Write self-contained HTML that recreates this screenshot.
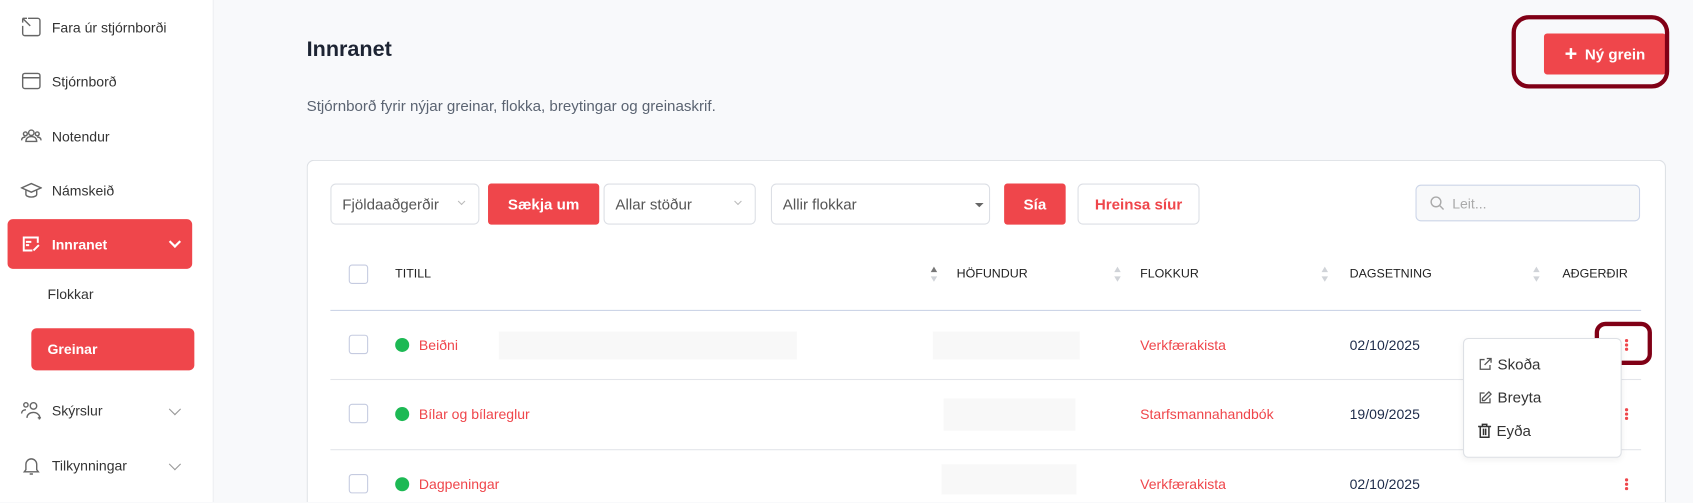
<!DOCTYPE html>
<html><head><meta charset="utf-8"><style>
*{box-sizing:border-box;margin:0;padding:0}
html,body{width:1693px;height:503px;overflow:hidden;background:#f8f9fb;font-family:"Liberation Sans",Arial,sans-serif}
#w{position:absolute;left:0;top:0;width:1568px;height:465px;overflow:hidden;transform:scale(1.0797);transform-origin:0 0;background:#f8f9fb}
.a{position:absolute}
.side{left:0;top:0;width:198px;height:465px;background:#fff;border-right:1px solid #eceef2}
.ni{position:absolute;left:19px;font-size:13px;color:#333;display:flex;align-items:center;gap:9px}
.ni svg{width:20px;height:20px;fill:none;stroke:#666;stroke-width:1.3}
.chev{position:absolute;left:158px;width:8px;height:8px;border-right:1.3px solid #999;border-bottom:1.3px solid #999;transform:rotate(45deg)}
.sel{border:1px solid #dcdfe5;border-radius:5px;background:#fff;height:38px;font-size:14px;color:#555;display:flex;align-items:center;padding-left:10px}
.btn{background:#ef464b;color:#fff;border-radius:3px;font-weight:bold;font-size:14px;display:flex;align-items:center;justify-content:center}
.th{font-size:11.5px;color:#222;top:248px}
.sort{width:6px;top:247px}
.sort:before{content:"";position:absolute;left:0;top:0;border:3.5px solid transparent;border-bottom:5px solid #d0d3d8;border-top:0}
.sort:after{content:"";position:absolute;left:0;top:9px;border:3.5px solid transparent;border-top:5px solid #d0d3d8;border-bottom:0}
.sort.d:before{border-bottom-color:#777}
.cb{width:18px;height:18px;border:1px solid #c5cbe0;border-radius:3px;background:#fff}
.dot{width:13px;height:13px;border-radius:50%;background:#1db954}
.red{color:#ef464b;font-size:13px}
.date{font-size:13px;color:#1d2b4a}
.ph{background:#f8f8f8}
.kb{width:3px;height:3px;background:#ef464b;border-radius:50%;box-shadow:0 4px 0 #ef464b,0 8px 0 #ef464b}
</style></head><body><div id="w">
<div class="a side">
 <div class="ni" style="top:15px"><svg viewBox="0 0 20 20"><path d="M7 2h9a2 2 0 0 1 2 2v12a2 2 0 0 1-2 2H4a2 2 0 0 1-2-2V9M2 2l7 7M2 2v4M2 2h4"/></svg>Fara úr stjórnborði</div>
 <div class="ni" style="top:65px"><svg viewBox="0 0 20 20"><rect x="2" y="3" width="16" height="14" rx="2"/><path d="M2 7h16"/></svg>Stjórnborð</div>
 <div class="ni" style="top:116px"><svg viewBox="0 0 20 20"><circle cx="10" cy="7" r="2.5"/><circle cx="4.5" cy="8" r="1.8"/><circle cx="15.5" cy="8" r="1.8"/><path d="M5 15c0-3 2-4.5 5-4.5s5 1.5 5 4.5zM1 14c0-2 1-3 3.5-3M19 14c0-2-1-3-3.5-3"/></svg>Notendur</div>
 <div class="ni" style="top:166px"><svg viewBox="0 0 20 20"><path d="M10 4L1 8l9 4 9-4zM5 10v4c0 1.5 2.5 2.5 5 2.5s5-1 5-2.5v-4"/></svg>Námskeið</div>
 <div class="a" style="left:7px;top:203px;width:171px;height:46px;background:#ef464b;border-radius:5px"></div>
 <div class="ni" style="top:216px;color:#fff;font-weight:bold"><svg viewBox="0 0 20 20" style="stroke:#fff;stroke-width:1.8"><path d="M16 9V4H3v12h8M5 8h5M5 11h3M12 16l5-5"/></svg>Innranet</div>
 <div class="chev" style="top:220px;border-color:#fff;border-width:2px"></div>
 <div class="a" style="left:44px;top:265px;font-size:13px;color:#333">Flokkar</div>
 <div class="a" style="left:29px;top:304px;width:151px;height:39px;background:#ef464b;border-radius:5px;color:#fff;font-weight:bold;font-size:13px;padding:12px 0 0 15px">Greinar</div>
 <div class="ni" style="top:370px"><svg viewBox="0 0 20 20"><circle cx="5" cy="5" r="2"/><circle cx="12" cy="6" r="3"/><path d="M1 13c0-2 1.5-3.5 4-3.5M6 17c0-3 2.5-5 6-5s5 2 6 4M16 17h3M17.5 15.5v3"/></svg>Skýrslur</div>
 <div class="chev" style="top:375px"></div>
 <div class="ni" style="top:421px"><svg viewBox="0 0 20 20"><path d="M5 14V9a5 5 0 0 1 10 0v5l1.5 2h-13zM8.5 18h3"/></svg>Tilkynningar</div>
 <div class="chev" style="top:426px"></div>
</div>
<div class="a" style="left:284px;top:35px;font-size:20px;font-weight:bold;color:#1d2433">Innranet</div>
<div class="a" style="left:284px;top:90px;font-size:14px;color:#5b6472">Stjórnborð fyrir nýjar greinar, flokka, breytingar og greinaskrif.</div>
<div class="a btn" style="left:1430px;top:31px;width:113px;height:38px;font-size:14px"><span style="font-size:20px;margin-right:7px;font-weight:bold">+</span>Ný grein</div>
<div class="a" style="left:1400px;top:14px;width:146px;height:68px;border:4px solid #800016;border-radius:16px"></div>
<div class="a" style="left:284px;top:148px;width:1259px;height:317px;background:#fff;border:1px solid #dde0e5;border-bottom:0;border-radius:7px 7px 0 0"></div>
<div class="a sel" style="left:306px;top:170px;width:138px">Fjöldaaðgerðir<span class="chev" style="left:118px;top:13px;width:5px;height:5px;border-color:#bbb"></span></div>
<div class="a btn" style="left:452px;top:170px;width:103px;height:38px">Sækja um</div>
<div class="a sel" style="left:559px;top:170px;width:141px">Allar stöður<span class="chev" style="left:121px;top:13px;width:5px;height:5px;border-color:#bbb"></span></div>
<div class="a sel" style="left:714px;top:170px;width:203px">Allir flokkar<span class="a" style="left:188px;top:17px;border:4px solid transparent;border-top:4px solid #666;border-bottom:0"></span></div>
<div class="a btn" style="left:930px;top:170px;width:57px;height:38px">Sía</div>
<div class="a sel" style="left:998px;top:170px;width:113px;justify-content:center;padding:0;color:#ef464b;font-weight:bold">Hreinsa síur</div>
<div class="a sel" style="left:1311px;top:171px;width:208px;height:34px;background:#f8f9fa;border-color:#ccd5e8;color:#aaa;font-size:13px;padding-left:12px"><svg width="14" height="14" viewBox="0 0 14 14" style="margin-right:7px" fill="none" stroke="#aaa" stroke-width="1.3"><circle cx="6" cy="6" r="4.5"/><path d="M9.5 9.5L13 13"/></svg>Leit...</div>
<div class="a cb" style="left:323px;top:245px"></div>
<div class="a th" style="left:366px">TITILL</div>
<div class="a sort d" style="left:862px"></div>
<div class="a th" style="left:886px">HÖFUNDUR</div>
<div class="a sort" style="left:1032px"></div>
<div class="a th" style="left:1056px">FLOKKUR</div>
<div class="a sort" style="left:1224px"></div>
<div class="a th" style="left:1250px">DAGSETNING</div>
<div class="a sort" style="left:1420px"></div>
<div class="a th" style="left:1447px">AÐGERÐIR</div>
<div class="a" style="left:306px;top:287px;width:1214px;height:1px;background:#cbd3e6"></div>
<div class="a" style="left:306px;top:351px;width:1214px;height:1px;background:#e3e5ea"></div>
<div class="a" style="left:306px;top:416px;width:1214px;height:1px;background:#e3e5ea"></div>
<div class="a cb" style="left:323px;top:310px"></div><div class="a dot" style="left:366px;top:313px"></div><div class="a red" style="left:388px;top:312px">Beiðni</div>
<div class="a ph" style="left:462px;top:307px;width:276px;height:26px"></div><div class="a ph" style="left:864px;top:307px;width:136px;height:26px"></div>
<div class="a red" style="left:1056px;top:312px">Verkfærakista</div><div class="a date" style="left:1250px;top:312px">02/10/2025</div>
<div class="a cb" style="left:323px;top:374px"></div><div class="a dot" style="left:366px;top:377px"></div><div class="a red" style="left:388px;top:376px">Bílar og bílareglur</div>
<div class="a ph" style="left:874px;top:369px;width:122px;height:30px"></div>
<div class="a red" style="left:1056px;top:376px">Starfsmannahandbók</div><div class="a date" style="left:1250px;top:376px">19/09/2025</div>
<div class="a cb" style="left:323px;top:439px"></div><div class="a dot" style="left:366px;top:442px"></div><div class="a red" style="left:388px;top:441px">Dagpeningar</div>
<div class="a ph" style="left:872px;top:430px;width:125px;height:28px"></div>
<div class="a red" style="left:1056px;top:441px">Verkfærakista</div><div class="a date" style="left:1250px;top:441px">02/10/2025</div>
<div class="a kb" style="left:1505px;top:314px"></div>
<div class="a kb" style="left:1505px;top:378px"></div>
<div class="a kb" style="left:1505px;top:443px"></div>
<div class="a" style="left:1477px;top:298px;width:53px;height:40px;border:4px solid #800016;border-radius:10px"></div>
<div class="a" style="left:1355px;top:313px;width:147px;height:111px;background:#fff;border:1px solid #dde0e5;border-radius:5px;box-shadow:0 2px 6px rgba(0,0,0,.06);font-size:14px;color:#333">
 <div class="a" style="left:13px;top:15px;display:flex;align-items:center;gap:5px"><svg width="13" height="13" viewBox="0 0 13 13" fill="none" stroke="#555" stroke-width="1.2"><path d="M6 2H2v9h9V7M8 1h4v4M12 1L6 7"/></svg>Skoða</div>
 <div class="a" style="left:13px;top:46px;display:flex;align-items:center;gap:5px"><svg width="13" height="13" viewBox="0 0 13 13" fill="none" stroke="#555" stroke-width="1.2"><path d="M6 2H2v9h9V7M10 1l2 2-6 6H4V7z"/></svg>Breyta</div>
 <div class="a" style="left:12px;top:77px;display:flex;align-items:center;gap:4px"><svg width="14" height="14" viewBox="0 0 14 14" fill="none" stroke="#333" stroke-width="1.4"><path d="M1 3h12M5 3V1h4v2M3 3v10h8V3M6 5v6M8 5v6"/></svg>Eyða</div>
</div>
</div></body></html>
